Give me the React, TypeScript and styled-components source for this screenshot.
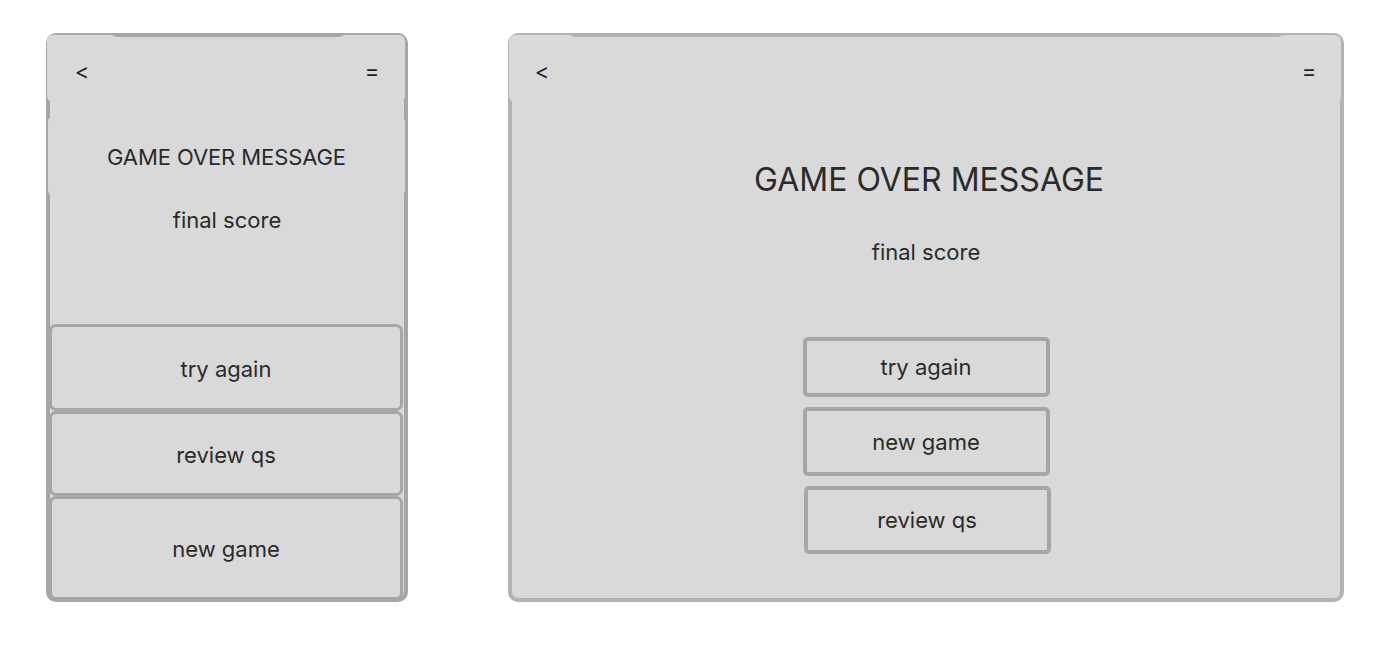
import React from "react";
import styled, { createGlobalStyle } from "styled-components";

const Global = createGlobalStyle`
  html, body { margin: 0; padding: 0; background: #ffffff; }
  body { font-family: Inter, "Noto Sans", sans-serif; color: #2a2a2a; }
  * { box-sizing: border-box; }
`;

const Page = styled.div`
  display: flex;
  align-items: flex-start;
  gap: 100px;
  padding: 33px 0 0 46px;
  width: 1394px;
  height: 647px;
`;

const Frame = styled.div<{ $w: number; $border: string }>`
  width: ${(p) => p.$w}px;
  height: 569px;
  border: 4px solid ${(p) => p.$border};
  border-radius: 10px;
  background: #d9d9d9;
  display: flex;
  flex-direction: column;
`;

const Header = styled.div<{ $ml: number; $mr: number }>`
  display: flex;
  justify-content: space-between;
  margin: -2px ${(p) => p.$mr}px 0 ${(p) => p.$ml}px;
`;

const NavBox = styled.div<{ $w: number }>`
  width: ${(p) => p.$w}px;
  height: 67px;
  border-radius: 6px;
  background: #d9d9d9;
  display: flex;
  align-items: center;
  justify-content: center;
  padding-top: 4px;
  font-size: 22px;
  line-height: 1;
  color: #222;
`;

const TitleBox = styled.div`
  margin: 14px -1px 0 -2px;
  height: 80px;
  border-radius: 6px;
  background: #d9d9d9;
  display: flex;
  align-items: center;
  justify-content: center;
  padding-top: 2px;
  font-size: 22px;
  letter-spacing: -0.1px;
`;

const Heading = styled.div`
  margin-top: 58px;
  text-align: center;
  font-size: 32px;
  line-height: 40px;
  padding-left: 6px;
`;

const Score = styled.div<{ $mt: number }>`
  margin-top: ${(p) => p.$mt}px;
  text-align: center;
  font-size: 22px;
  line-height: 26px;
`;

const StackCol = styled.div`
  margin: auto 1px -2px -1px;
  display: flex;
  flex-direction: column;
`;

const StackButton = styled.div<{ $h: number }>`
  flex: none;
  height: ${(p) => p.$h}px;
  border: 3px solid #a6a6a6;
  border-radius: 7px;
  background: #d9d9d9;
  display: flex;
  align-items: center;
  justify-content: center;
  padding-top: 2px;
  font-size: 22px;
`;

const ButtonCol = styled.div`
  margin-top: 72px;
  display: flex;
  flex-direction: column;
  align-items: center;
  gap: 10px;
`;

const WideButton = styled.div<{ $h: number; $dx: number }>`
  flex: none;
  width: 247px;
  height: ${(p) => p.$h}px;
  border: 4px solid #a6a6a6;
  border-radius: 5px;
  display: flex;
  align-items: center;
  justify-content: center;
  font-size: 22px;
  transform: translateX(${(p) => p.$dx}px);
`;

export default function App() {
  return (
    <>
      <Global />
      <Page>
        <Frame $w={362} $border="#a6a6a6">
          <Header $ml={-3} $mr={-1}>
            <NavBox $w={70}>&lt;</NavBox>
            <NavBox $w={66}>=</NavBox>
          </Header>
          <TitleBox>GAME OVER MESSAGE</TitleBox>
          <Score $mt={11}>final score</Score>
          <StackCol>
            <StackButton $h={87}>try again</StackButton>
            <StackButton $h={85}>review qs</StackButton>
            <StackButton $h={104}>new game</StackButton>
          </StackCol>
        </Frame>
        <Frame $w={836} $border="#b3b3b3">
          <Header $ml={-3} $mr={-1}>
            <NavBox $w={66}>&lt;</NavBox>
            <NavBox $w={64}>=</NavBox>
          </Header>
          <Heading>GAME OVER MESSAGE</Heading>
          <Score $mt={39}>final score</Score>
          <ButtonCol>
            <WideButton $h={60} $dx={0}>try again</WideButton>
            <WideButton $h={69} $dx={0}>new game</WideButton>
            <WideButton $h={68} $dx={1}>review qs</WideButton>
          </ButtonCol>
        </Frame>
      </Page>
    </>
  );
}
